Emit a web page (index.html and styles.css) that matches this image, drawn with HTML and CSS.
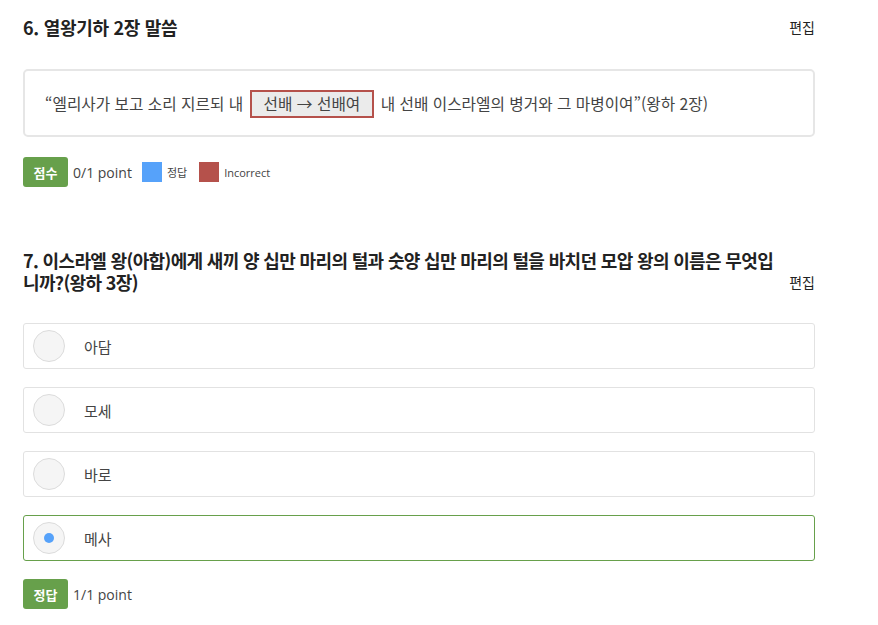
FILE: index.html
```html
<!DOCTYPE html>
<html lang="ko">
<head>
<meta charset="utf-8">
<link rel="stylesheet" href="styles.css">
</head>
<body>
<div class="page">
  <section class="question q6">
    <div class="q-head">
      <h2 class="q-title">6. 열왕기하 2장 말씀</h2>
      <span class="edit">편집</span>
    </div>
    <div class="passage">“엘리사가 보고 소리 지르되 내 <span class="blank">선배 → 선배여</span> 내 선배 이스라엘의 병거와 그 마병이여”(왕하 2장)</div>
    <div class="score-row">
      <span class="badge">점수</span>
      <span class="points">0/1 point</span>
      <span class="legend-box blue"></span>
      <span class="legend-text">정답</span>
      <span class="legend-box red"></span>
      <span class="legend-text">Incorrect</span>
    </div>
  </section>

  <section class="question q7">
    <div class="q-head wrap">
      <h2 class="q-title">7. 이스라엘 왕(아합)에게 새끼 양 십만 마리의 털과 숫양 십만 마리의 털을 바치던 모압 왕의 이름은 무엇입니까?(왕하 3장)</h2>
      <span class="edit">편집</span>
    </div>
    <div class="options">
      <div class="option"><span class="radio"></span><span class="opt-text">아담</span></div>
      <div class="option"><span class="radio"></span><span class="opt-text">모세</span></div>
      <div class="option"><span class="radio"></span><span class="opt-text">바로</span></div>
      <div class="option selected"><span class="radio"><span class="dot"></span></span><span class="opt-text">메사</span></div>
    </div>
    <div class="score-row">
      <span class="badge">정답</span>
      <span class="points">1/1 point</span>
    </div>
  </section>
</div>
</body>
</html>
```
FILE: styles.css
```css
html, body {
  margin: 0;
  padding: 0;
  background: #ffffff;
}
body {
  font-family: "Noto Sans CJK KR", "Noto Sans", sans-serif;
  color: #444;
}
.page {
  width: 792px;
  padding: 16px 0 0 23px;
}
.q-head {
  display: flex;
  justify-content: space-between;
  align-items: flex-end;
}
.q-title {
  margin: 0;
  font-size: 18px;
  font-weight: 700;
  color: #222;
  line-height: 22px;
  letter-spacing: -0.3px;
}
.wrap .q-title {
  width: 760px;
  letter-spacing: -0.65px;
}
.edit {
  font-size: 14px;
  color: #222;
  line-height: 22px;
  flex-shrink: 0;
}
.passage {
  margin-top: 31px;
  border: 2px solid #e6e6e6;
  border-radius: 5px;
  box-sizing: border-box;
  height: 68px;
  padding: 19px 0 0 20px;
  font-size: 15.7px;
  line-height: 26px;
  color: #444;
}
.blank {
  display: inline-block;
  border: 2px solid #b5514b;
  background: #ebebeb;
  padding: 0 12px;
  line-height: 24px;
  margin: 0 2px;
}
.score-row {
  display: flex;
  align-items: center;
  margin-top: 20px;
}
.badge {
  display: inline-flex;
  align-items: center;
  justify-content: center;
  width: 45px;
  height: 30px;
  background: #67a04b;
  color: #fff;
  font-size: 13px;
  font-weight: 700;
  border-radius: 3px;
}
.points {
  font-size: 14px;
  color: #444;
  margin-left: 5px;
  font-family: "Open Sans", "Noto Sans CJK KR", sans-serif;
}
.legend-box {
  width: 20px;
  height: 20px;
  margin-left: 10px;
}
.legend-box.blue { background: #56a2fa; }
.legend-box.red { background: #b5514b; margin-left: 12px; }
.legend-text {
  font-size: 11px;
  color: #444;
  margin-left: 5px;
  font-family: "Open Sans", "Noto Sans CJK KR", sans-serif;
}
.q7 {
  margin-top: 62px;
}
.options {
  margin-top: 30px;
  display: flex;
  flex-direction: column;
  gap: 18px;
}
.option {
  height: 46px;
  box-sizing: border-box;
  border: 1px solid #e2e2e2;
  border-radius: 3px;
  display: flex;
  align-items: center;
  padding-left: 9px;
}
.option.selected {
  border-color: #67a04b;
}
.radio {
  width: 32px;
  height: 32px;
  box-sizing: border-box;
  border: 1px solid #dcdcdc;
  border-radius: 50%;
  background: #f5f5f5;
  display: flex;
  align-items: center;
  justify-content: center;
}
.dot {
  width: 10px;
  height: 10px;
  border-radius: 50%;
  background: #56a2fa;
}
.opt-text {
  margin-left: 19px;
  font-size: 15px;
  color: #444;
}
.q7 .score-row {
  margin-top: 18px;
}
```
